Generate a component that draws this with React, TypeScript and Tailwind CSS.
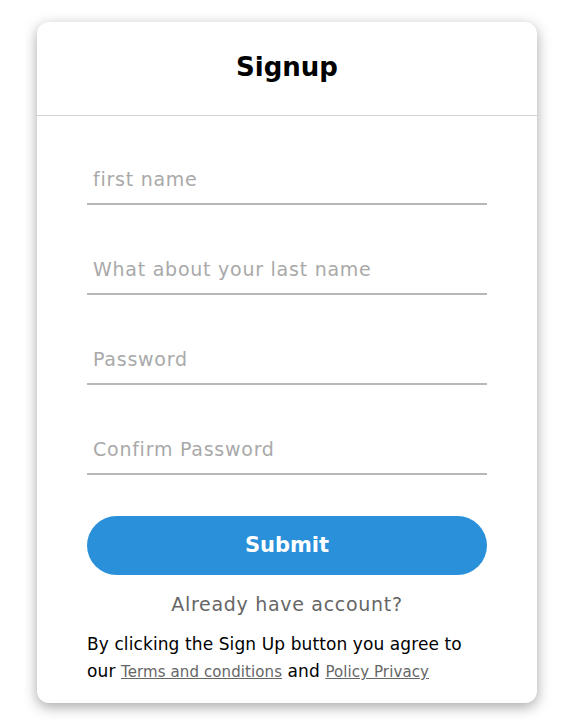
import React from 'react';

const fields = ['first name', 'What about your last name', 'Password', 'Confirm Password'];

const App: React.FC = () => {
  return (
    <div className="min-h-screen bg-white pt-[22px] pl-[4px] font-['DejaVu_Sans',sans-serif]">
      <div className="mx-auto w-[500px] rounded-xl bg-white shadow-[0_4px_14px_rgba(0,0,0,0.35)]">
        <header className="h-[94px] flex items-center justify-center border-b border-[#d6d6d6]">
          <h1 className="-mt-[3px] text-[26px] font-semibold text-black leading-none">Signup</h1>
        </header>

        <form className="px-[50px] pt-[39px] pb-[18px]" onSubmit={(e) => e.preventDefault()}>
          <div className="flex flex-col gap-[40px]">
            {fields.map((f) => (
              <input
                key={f}
                type={f.includes('Password') ? 'password' : 'text'}
                placeholder={f}
                className="h-[50px] w-full border-b-2 border-[#b8b8b8] px-[6px] text-[19px] tracking-[0.75px] text-black outline-none placeholder:text-[#a9a9a9]"
              />
            ))}
          </div>

          <button
            type="submit"
            className="mt-[41px] h-[59px] w-full rounded-full bg-[#2a90da] text-[21px] font-bold text-white"
          >
            Submit
          </button>

          <p className="mt-[17px] text-center text-[19px] leading-[24px] tracking-[0.7px] text-[#666]">
            Already have account?
          </p>

          <div className="mt-[15px] text-[17px] leading-[27px] tracking-[0.1px] text-black">
            <p>By clicking the Sign Up button you agree to</p>
            <p>
              <span>our </span>
              <a href="#" className="text-[15px] leading-none text-[#666] underline">Terms and conditions</a>
              <span> and </span>
              <a href="#" className="text-[15px] leading-none text-[#666] underline">Policy Privacy</a>
            </p>
          </div>
        </form>
      </div>
    </div>
  );
};

export default App;
